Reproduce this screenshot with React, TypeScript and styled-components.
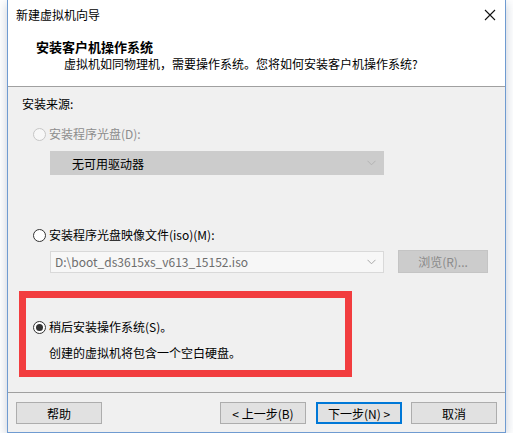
import styled, { createGlobalStyle } from 'styled-components';

const GlobalStyle = createGlobalStyle`
  html, body {
    margin: 0;
    padding: 0;
    background: #ffffff;
  }
  body {
    font-family: "Noto Sans CJK SC", "Liberation Sans", sans-serif;
    font-size: 12px;
    color: #000;
  }
`;

// window frame
const Window = styled.div`
  box-sizing: border-box;
  width: 499px;
  height: 433px;
  margin-left: 7px;
  display: flex;
  flex-direction: column;
  background: #f0f0f0;
  border: 1px solid #6f9bd1;
  border-top: none;
  box-shadow: 0 3px 10px rgba(90, 110, 140, 0.35);
`;

const TitleBar = styled.div`
  height: 30px;
  display: flex;
  align-items: center;
  justify-content: space-between;
  padding: 0 9px 0 8px;
  background: #fff;
  line-height: 16px;
`;

const CloseIcon = () => (
  <svg width="12" height="12" viewBox="0 0 12 12">
    <path d="M1 1 L11 11 M11 1 L1 11" stroke="#111" strokeWidth="1.1" />
  </svg>
);

const Header = styled.div`
  height: 57px;
  box-sizing: border-box;
  padding: 8px 0 0 28px;
  background: #fff;
  border-bottom: 1px solid #a0a0a0;
`;

const HeaderTitle = styled.div`
  font-size: 13px;
  font-weight: bold;
  line-height: 18px;
`;

const HeaderSub = styled.div`
  line-height: 16px;
  padding-left: 28px;
`;

const Body = styled.div`
  flex: 1;
  display: flex;
  flex-direction: column;
  padding: 9px 0 0 14px;
`;

const SectionLabel = styled.div`
  line-height: 16px;
`;

const OptionRow = styled.label<{ $top: number; $indent?: number; $disabled?: boolean }>`
  display: flex;
  align-items: center;
  gap: 3px;
  height: 16px;
  line-height: 16px;
  margin-top: ${(p) => p.$top}px;
  padding-left: ${(p) => p.$indent ?? 11}px;
  color: ${(p) => (p.$disabled ? '#8d8d8d' : '#000')};
`;

const Radio = styled.span<{ $checked?: boolean; $disabled?: boolean }>`
  box-sizing: border-box;
  width: 13px;
  height: 13px;
  border-radius: 50%;
  border: 1px solid ${(p) => (p.$disabled ? '#c6c6c6' : '#333')};
  background: ${(p) => (p.$disabled ? '#f7f7f7' : '#fff')};
  display: flex;
  align-items: center;
  justify-content: center;
  &::after {
    content: '';
    display: ${(p) => (p.$checked ? 'block' : 'none')};
    width: 7px;
    height: 7px;
    border-radius: 50%;
    background: #333;
  }
`;

const FieldRow = styled.div<{ $top: number }>`
  display: flex;
  align-items: center;
  gap: 14px;
  margin: ${(p) => p.$top}px 0 0 28px;
`;

const Combo = styled.div<{ $variant: 'off' | 'file' }>`
  box-sizing: border-box;
  width: 334px;
  height: ${(p) => (p.$variant === 'off' ? 24 : 22)}px;
  display: flex;
  align-items: center;
  justify-content: space-between;
  padding: ${(p) => (p.$variant === 'off' ? '0 7px 0 21px' : '0 7px 0 4px')};
  background: ${(p) => (p.$variant === 'off' ? '#cccccc' : '#f7f7f7')};
  border: 1px solid ${(p) => (p.$variant === 'off' ? '#cccccc' : '#d9d9d9')};
  color: ${(p) => (p.$variant === 'off' ? '#000' : '#6d6d6d')};
`;

const Chevron = ({ color }: { color: string }) => (
  <svg width="9" height="6" viewBox="0 0 9 6">
    <path d="M0.5 0.8 L4.5 4.8 L8.5 0.8" stroke={color} strokeWidth="1" fill="none" />
  </svg>
);

const BrowseButton = styled.div`
  box-sizing: border-box;
  width: 90px;
  height: 23px;
  display: flex;
  align-items: center;
  justify-content: center;
  background: #cccccc;
  border: 1px solid #c4c4c4;
  color: #8a8a8a;
`;

// highlight frame drawn around the chosen option
const Highlight = styled.div`
  box-sizing: border-box;
  width: 333px;
  height: 86px;
  margin: 18px 0 0 -3px;
  border: 7px solid #f23d3f;
  padding-top: 21px;
`;

const Note = styled.div`
  line-height: 16px;
  margin: 10px 0 0 23px;
`;

const Footer = styled.div`
  display: flex;
  align-items: center;
  padding: 9px 8px 8px;
  border-top: 1px solid #a0a0a0;
`;

const Spacer = styled.div`
  flex: 1;
`;

const Button = styled.button<{ $primary?: boolean }>`
  box-sizing: border-box;
  width: 86px;
  height: 22px;
  margin-left: ${(p) => (p.$primary ? 10 : 9)}px;
  padding: 0;
  font-family: inherit;
  font-size: 12px;
  color: #000;
  background: #e1e1e1;
  border: ${(p) => (p.$primary ? '2px solid #0078d7' : '1px solid #adadad')};
  &:first-child {
    margin-left: 0;
  }
`;

export default function App() {
  return (
    <>
      <GlobalStyle />
      <Window>
        <TitleBar>
          <span>新建虚拟机向导</span>
          <CloseIcon />
        </TitleBar>
        <Header>
          <HeaderTitle>安装客户机操作系统</HeaderTitle>
          <HeaderSub>虚拟机如同物理机，需要操作系统。您将如何安装客户机操作系统?</HeaderSub>
        </Header>
        <Body>
          <SectionLabel>安装来源:</SectionLabel>
          <OptionRow $top={14} $disabled>
            <Radio $disabled />
            安装程序光盘(D):
          </OptionRow>
          <FieldRow $top={9}>
            <Combo $variant="off">
              <span>无可用驱动器</span>
              <Chevron color="#b3b3b3" />
            </Combo>
          </FieldRow>
          <OptionRow $top={52}>
            <Radio />
            安装程序光盘映像文件(iso)(M):
          </OptionRow>
          <FieldRow $top={7}>
            <Combo $variant="file">
              <span>D:\boot_ds3615xs_v613_15152.iso</span>
              <Chevron color="#a8a8a8" />
            </Combo>
            <BrowseButton>浏览(R)...</BrowseButton>
          </FieldRow>
          <Highlight>
            <OptionRow $top={0} $indent={7}>
              <Radio $checked />
              稍后安装操作系统(S)。
            </OptionRow>
            <Note>创建的虚拟机将包含一个空白硬盘。</Note>
          </Highlight>
        </Body>
        <Footer>
          <Button>帮助</Button>
          <Spacer />
          <Button>&lt; 上一步(B)</Button>
          <Button $primary>下一步(N) &gt;</Button>
          <Button>取消</Button>
        </Footer>
      </Window>
    </>
  );
}
